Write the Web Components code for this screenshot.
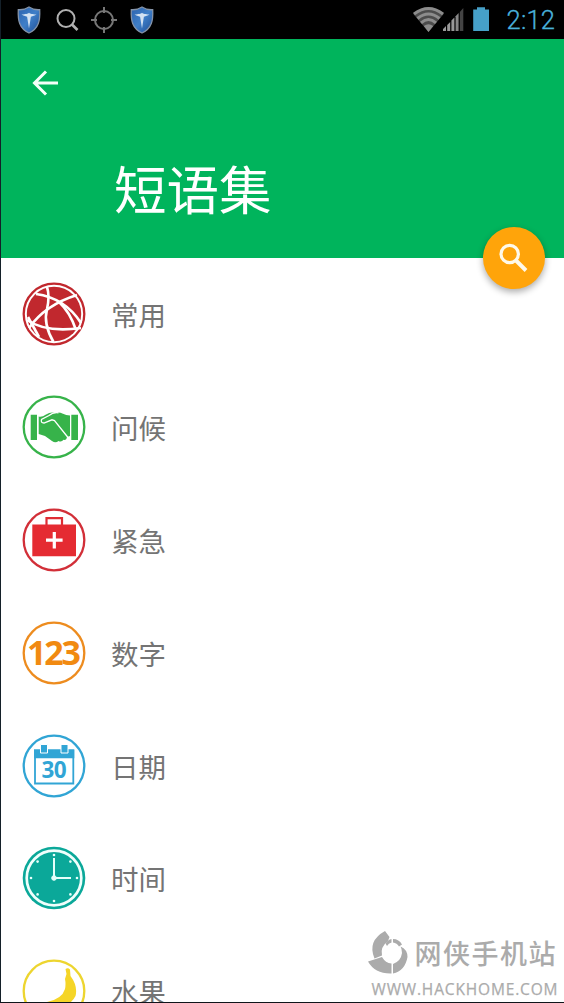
<!DOCTYPE html>
<html lang="zh-CN">
<head>
<meta charset="utf-8">
<title>短语集</title>
<style>
html,body{margin:0;height:100%;overflow:hidden;background:#fff;font-family:"Noto Sans CJK SC","Noto Sans",sans-serif}
</style>
</head>
<body>
<phrase-app></phrase-app>
<script>
const define=(name,html)=>customElements.define(name,class extends HTMLElement{
  constructor(){super();this.attachShadow({mode:'open'}).innerHTML=html;}
});

define('shield-icon',`<style>:host{display:block;width:24px;height:28px}svg{display:block}</style>
<svg width="24" height="28" viewBox="0 0 24 28"><defs><linearGradient id="g" x1="0" x2="1" y2="1"><stop stop-color="#2c62ad"/><stop offset=".5" stop-color="#3f7fc8"/><stop offset="1" stop-color="#1d4c94"/></linearGradient></defs>
<path d="M12 1C9 3 5 4 1.300 3.700C.8 14 2 22.500 12 27C22 22.500 23.200 14 22.700 3.700C19 4 15 3 12 1Z" fill="url(#g)" stroke="#8493a8" stroke-width="1.300"/>
<path d="M4.500 8.600C9 8.200 10.500 8 12 6.800C13.500 8 15 8.200 19.500 8.600C17 10.300 14.500 10.400 13.900 10.800L12 22.500L10.100 10.800C9.500 10.400 7 10.300 4.500 8.600Z" fill="#d3e2f2"/></svg>`);

define('status-bar',`<style>:host{display:flex;height:39px;background:#000;align-items:center;justify-content:space-between;box-sizing:border-box;padding:0 9px 0 16px}
div{display:flex;align-items:center}svg{display:block}.l{gap:12.700px}</style>
<div class="l"><shield-icon></shield-icon>
<svg width="25" height="26" viewBox="0 0 25 26" fill="none" stroke="#b0b0b0" stroke-width="2"><circle cx="12" cy="11.500" r="8.500"/><path d="M18 17.500L23.500 23" stroke-width="2.700"/></svg>
<svg width="26" height="26" viewBox="0 0 26 26" fill="none" stroke="#777" stroke-width="2"><circle cx="13" cy="13" r="9"/><path d="M13 0V6M13 20V26M0 13H6M20 13H26"/></svg>
<shield-icon></shield-icon></div>
<div><svg width="142" height="39" viewBox="413 0 142 39">
<path d="M413 13.500Q428.500 1.500 444 13.500L428.500 32Z" fill="#4c4c4c"/><g fill="none" stroke="#8c8c8c" stroke-width="3"><path d="M414 14Q428.500 3 443 14"/><path d="M417.500 18.500Q428.500 9.500 439.500 18.500"/><path d="M421 22.800Q428.500 16.200 436 22.800"/></g><path d="M423.800 26Q428.500 22.500 433.200 26L428.500 32Z" fill="#8c8c8c"/>
<path d="M443 31V29L446 26V31ZM447.200 31V25L450.200 22V31ZM451.400 31V20.500L454.400 17.500V31Z" fill="#999"/><path d="M455.600 31V16.200L458.600 13V31Z" fill="#888"/><path d="M459.800 31V12L463.300 8V31Z" fill="#444"/>
<path d="M473.200 31V9.500H477V7.200H485V9.500H489V31Z" fill="#46a0c8"/>
<text x="506.500" y="29" font-family="Roboto" font-size="25.500" font-weight="300" fill="#4ab2dc" stroke="#4ab2dc" stroke-width=".3" textLength="48.500">2:12</text></svg></div>`);

define('app-header',`<style>:host{display:flex;flex-direction:column;height:219px;background:#00b45c;color:#fff;box-sizing:border-box;padding:28px 0 0 28px;position:relative}
h1{margin:50px 0 0 85px;font-size:52.500px;line-height:76px;font-weight:400}
svg{display:block}.fab{position:absolute;right:19px;bottom:-31px;width:62px;height:62px;border-radius:50%;background:#ffa40a;box-shadow:0 3px 7px #0005}</style>
<svg width="32" height="32" viewBox="0 0 32 32" fill="none" stroke="#f4fff8" stroke-width="3"><path d="M29 16H6M17 4.500L5.500 16L17 27.500"/></svg><h1><slot></slot></h1>
<div class="fab"><svg width="62" height="62" viewBox="0 0 62 62" fill="none" stroke="#fff9e9" stroke-width="3.200"><circle cx="26.700" cy="27" r="8.700"/><path d="M32.500 33L43 43.500" stroke-width="3.900"/></svg></div>`);

const ring=(c)=>`<circle cx="32" cy="32" r="30.300" fill="#fff" stroke="${c}" stroke-width="2.300"/>`;
const icons={
globe:`${ring('#c1282e')}<circle cx="32" cy="32" r="27.200" fill="#c1282e"/><g fill="none" stroke="#fff" stroke-width="2.600"><path d="M14 12Q43 16 59 41"/><path d="M25 5Q28 14 25 27Q21 42 31.500 60"/><path d="M55 13Q23 23 7 46"/><path d="M5 38Q24 51 59 46"/><path d="M16 14L38 37M37 20Q48 30 54 48"/><path d="M6 35L17 55"/></g>`.replace('M16 14L38 37',''),
hands:`${ring('#37b34a')}<g fill="#37b34a"><path d="M8.700 19.700H15V45H8.700ZM49.300 19.700H56V45H49.300Z"/><path d="M16.700 21.500Q20 22.300 24 19.500Q29 16.500 33 18Q37 16.800 41 18.800Q44 20.500 48 20.500V41L45 42Q44.500 45.500 41.500 44.800Q39.500 47.500 36.500 46Q33.500 48.500 30 46L23 41L16.700 39Z"/></g><path d="M36.500 17.800Q31 17 27 20.500L19.500 24.500Q18.500 28 22 28L30 24.800L32.500 25.500L46 42.500" fill="none" stroke="#fff" stroke-width="1.300"/>`,
case:`${ring('#d22f38')}<path d="M10.300 16.600H54V48.300H10.300Z" fill="#e52b32"/><path d="M24.500 17V10.200H40V17" fill="none" stroke="#df2c34" stroke-width="2.200"/><path d="M32.300 24V40.500M24 32.200H40.600" stroke="#fff" stroke-width="3.200"/>`,
numbers:`${ring('#ed8c1f')}<text x="32" y="43.700" text-anchor="middle" font-family="Open Sans" font-weight="700" font-size="34" textLength="54" fill="#f18a11">123</text>`,
calendar:`${ring('#31a5d5')}<path d="M13 17H51.300V49.500H13Z" fill="#fff" stroke="#31a5d5" stroke-width="1.800"/><path d="M12 15.300H52.300V24.300H12Z" fill="#31a5d5"/><path d="M18.500 10.500H25.500V19H18.500ZM39 10.500H46V19H39Z" fill="#31a5d5" stroke="#fff" stroke-width="1"/><text x="32" y="44.300" text-anchor="middle" font-family="Open Sans" font-weight="700" font-size="22.500" textLength="25" fill="#31a5d5">30</text>`,
clock:`<circle cx="32" cy="32" r="31.300" fill="#0ba899"/><circle cx="32" cy="32" r="27.300" fill="none" stroke="#f0fffc" stroke-width="2.700"/><g fill="#e5fffa" stroke="#e5fffa"><path d="M32 12V32H49" fill="none" stroke-width="2"/><circle cx="32" cy="32" r="2.300"/></g><g fill="#e5fffa"><circle cx="32" cy="9" r="1.300"/><circle cx="32" cy="55" r="1.300"/><circle cx="9" cy="32" r="1.300"/><circle cx="55" cy="32" r="1.300"/><circle cx="15.600" cy="15.600" r="1.300"/><circle cx="48.400" cy="15.600" r="1.300"/><circle cx="15.600" cy="48.400" r="1.300"/><circle cx="48.400" cy="48.400" r="1.300"/></g>`,
banana:`${ring('#edd52f')}<path d="M43.500 10Q46 8.500 48 10.500L48.500 17Q56 27 53.500 37Q46 52 22 46L25 43Q40 40 43 30Q44 25 43 20L44.500 15Z" fill="#f5d527"/>`
};
customElements.define('phrase-row',class extends HTMLElement{
  connectedCallback(){
    this.attachShadow({mode:'open'}).innerHTML=`<style>:host{display:flex;align-items:center;height:112.800px;flex:none;box-sizing:border-box;padding-left:21px;gap:25px;font-size:27.500px;line-height:40px;color:#747474}svg{display:block;flex:none}</style><svg width="64" height="64" viewBox="0 0 64 64">${icons[this.getAttribute('icon')]}</svg><span><slot></slot></span>`;
  }
});

define('site-watermark',`<style>:host{display:block;width:196px;height:74px}svg{display:block}</style>
<svg width="196" height="74" viewBox="364 928 196 74" fill="#ababab">
<path d="M385 931L389.500 937L388 941Q380 947 382 955.500L374.500 958.500Q367 941 385 931Z"/><path d="M368 961.500L382 957Q385.500 963 391.500 963.500V973.500Q375 974 368 961.500Z"/><path d="M393 964Q401 961 402 953Q402 949 400.500 946.500Q407.500 949.500 407.500 957Q405 971 393 973.500Z"/><path d="M385.500 943.500Q388 939.500 391.500 939V942.500Q388.500 943 387 946ZM393 939Q399 939 402 944.500L399 946.500Q397 943 393 942.500Z"/>
<text x="414.500" y="964" font-family="Noto Sans CJK SC" font-size="27" font-weight="500" textLength="141">网侠手机站</text>
<text x="371.500" y="994.800" font-family="Open Sans" font-size="15.500" font-weight="400" stroke="#ababab" stroke-width=".25" textLength="186">WWW.HACKHOME.COM</text></svg>`);

define('phrase-app',`<style>:host{display:flex;flex-direction:column;width:100%;height:100vh;box-sizing:border-box;border-left:1px solid #142029;border-bottom:1px solid #10151b;position:relative;overflow:hidden;background:#fff}
status-bar,app-header{flex:none}app-header{z-index:1}main{flex:1;min-height:0;overflow:hidden}site-watermark{position:absolute;right:4px;bottom:0}</style>
<status-bar></status-bar><app-header>短语集</app-header>
<main><phrase-row icon="globe">常用</phrase-row><phrase-row icon="hands">问候</phrase-row><phrase-row icon="case">紧急</phrase-row><phrase-row icon="numbers">数字</phrase-row><phrase-row icon="calendar">日期</phrase-row><phrase-row icon="clock">时间</phrase-row><phrase-row icon="banana">水果</phrase-row></main>
<site-watermark></site-watermark>`);
</script>
</body>
</html>
